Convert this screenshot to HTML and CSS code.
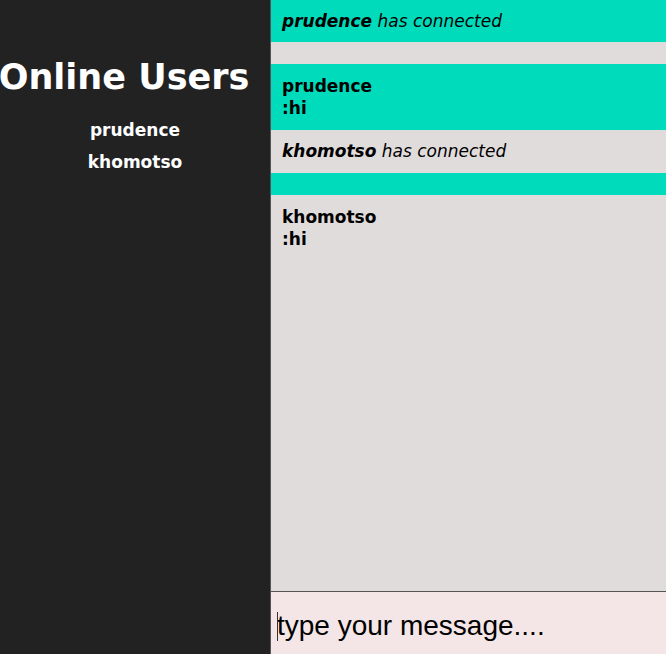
FILE: index.html
```html
<!DOCTYPE html>
<html>
<head>
<meta charset="utf-8">
<link rel="stylesheet" href="styles.css">
</head>
<body>
<div class="app">
  <aside class="sidebar">
    <h1 class="title">Online Users</h1>
    <ul class="users">
      <li>prudence</li>
      <li>khomotso</li>
    </ul>
  </aside>
  <main class="chat">
    <ul class="messages">
      <li class="notice"><b>prudence</b> has connected</li>
      <li class="empty"></li>
      <li class="msg"><div>prudence</div><div>:hi</div></li>
      <li class="notice"><b>khomotso</b> has connected</li>
      <li class="empty"></li>
      <li class="msg"><div>khomotso</div><div>:hi</div></li>
    </ul>
    <form class="composer">
      <input class="input" type="text" placeholder="type your message....">
      <span class="caret"></span>
    </form>
  </main>
</div>
</body>
</html>
```
FILE: styles.css
```css
html, body {
  margin: 0;
  padding: 0;
  height: 100%;
}
body {
  font-family: "DejaVu Sans", Verdana, sans-serif;
}
.app {
  display: flex;
  height: 100vh;
}
.sidebar {
  width: 270px;
  flex: none;
  background: #222222;
  color: #ffffff;
  text-align: center;
}
.title {
  margin: 56px 0 0 -22px;
  font-size: 35px;
  font-weight: bold;
  line-height: 42px;
  white-space: nowrap;
}
.users {
  list-style: none;
  margin: 16px 0 0 0;
  padding: 0;
  font-weight: bold;
  font-size: 17px;
}
.users li {
  line-height: 32px;
}
.chat {
  flex: 1;
  display: flex;
  flex-direction: column;
  border-left: 1px solid #555555;
  background: #e1dcdc;
  min-width: 0;
}
.messages {
  flex: 1;
  list-style: none;
  margin: 0;
  padding: 0;
}
.messages li {
  padding: 11px 11px;
  font-size: 17px;
  line-height: 20px;
  color: #000;
}
.messages li:nth-child(odd) {
  background: #00dbbb;
}
.notice {
  font-style: italic;
}
.messages li.notice + li.empty {
  margin-top: 0;
}
.messages li:nth-child(4) {
  line-height: 21px;
}
.empty {
  height: 0;
}
.messages li.msg {
  font-weight: bold;
  line-height: 22px;
}
.composer {
  margin: 0;
  border-top: 1px solid #555555;
  position: relative;
}
.input {
  display: block;
  width: 100%;
  box-sizing: border-box;
  height: 62px;
  border: none;
  outline: none;
  background: #f4e6e6;
  font-family: "Liberation Sans", Arial, sans-serif;
  font-size: 28px;
  padding: 6px 6px 0 6px;
  color: #000;
}
.input::placeholder {
  color: #000;
  opacity: 1;
}
.caret {
  position: absolute;
  left: 6px;
  top: 20px;
  width: 1px;
  height: 29px;
  background: #333333;
}
```
